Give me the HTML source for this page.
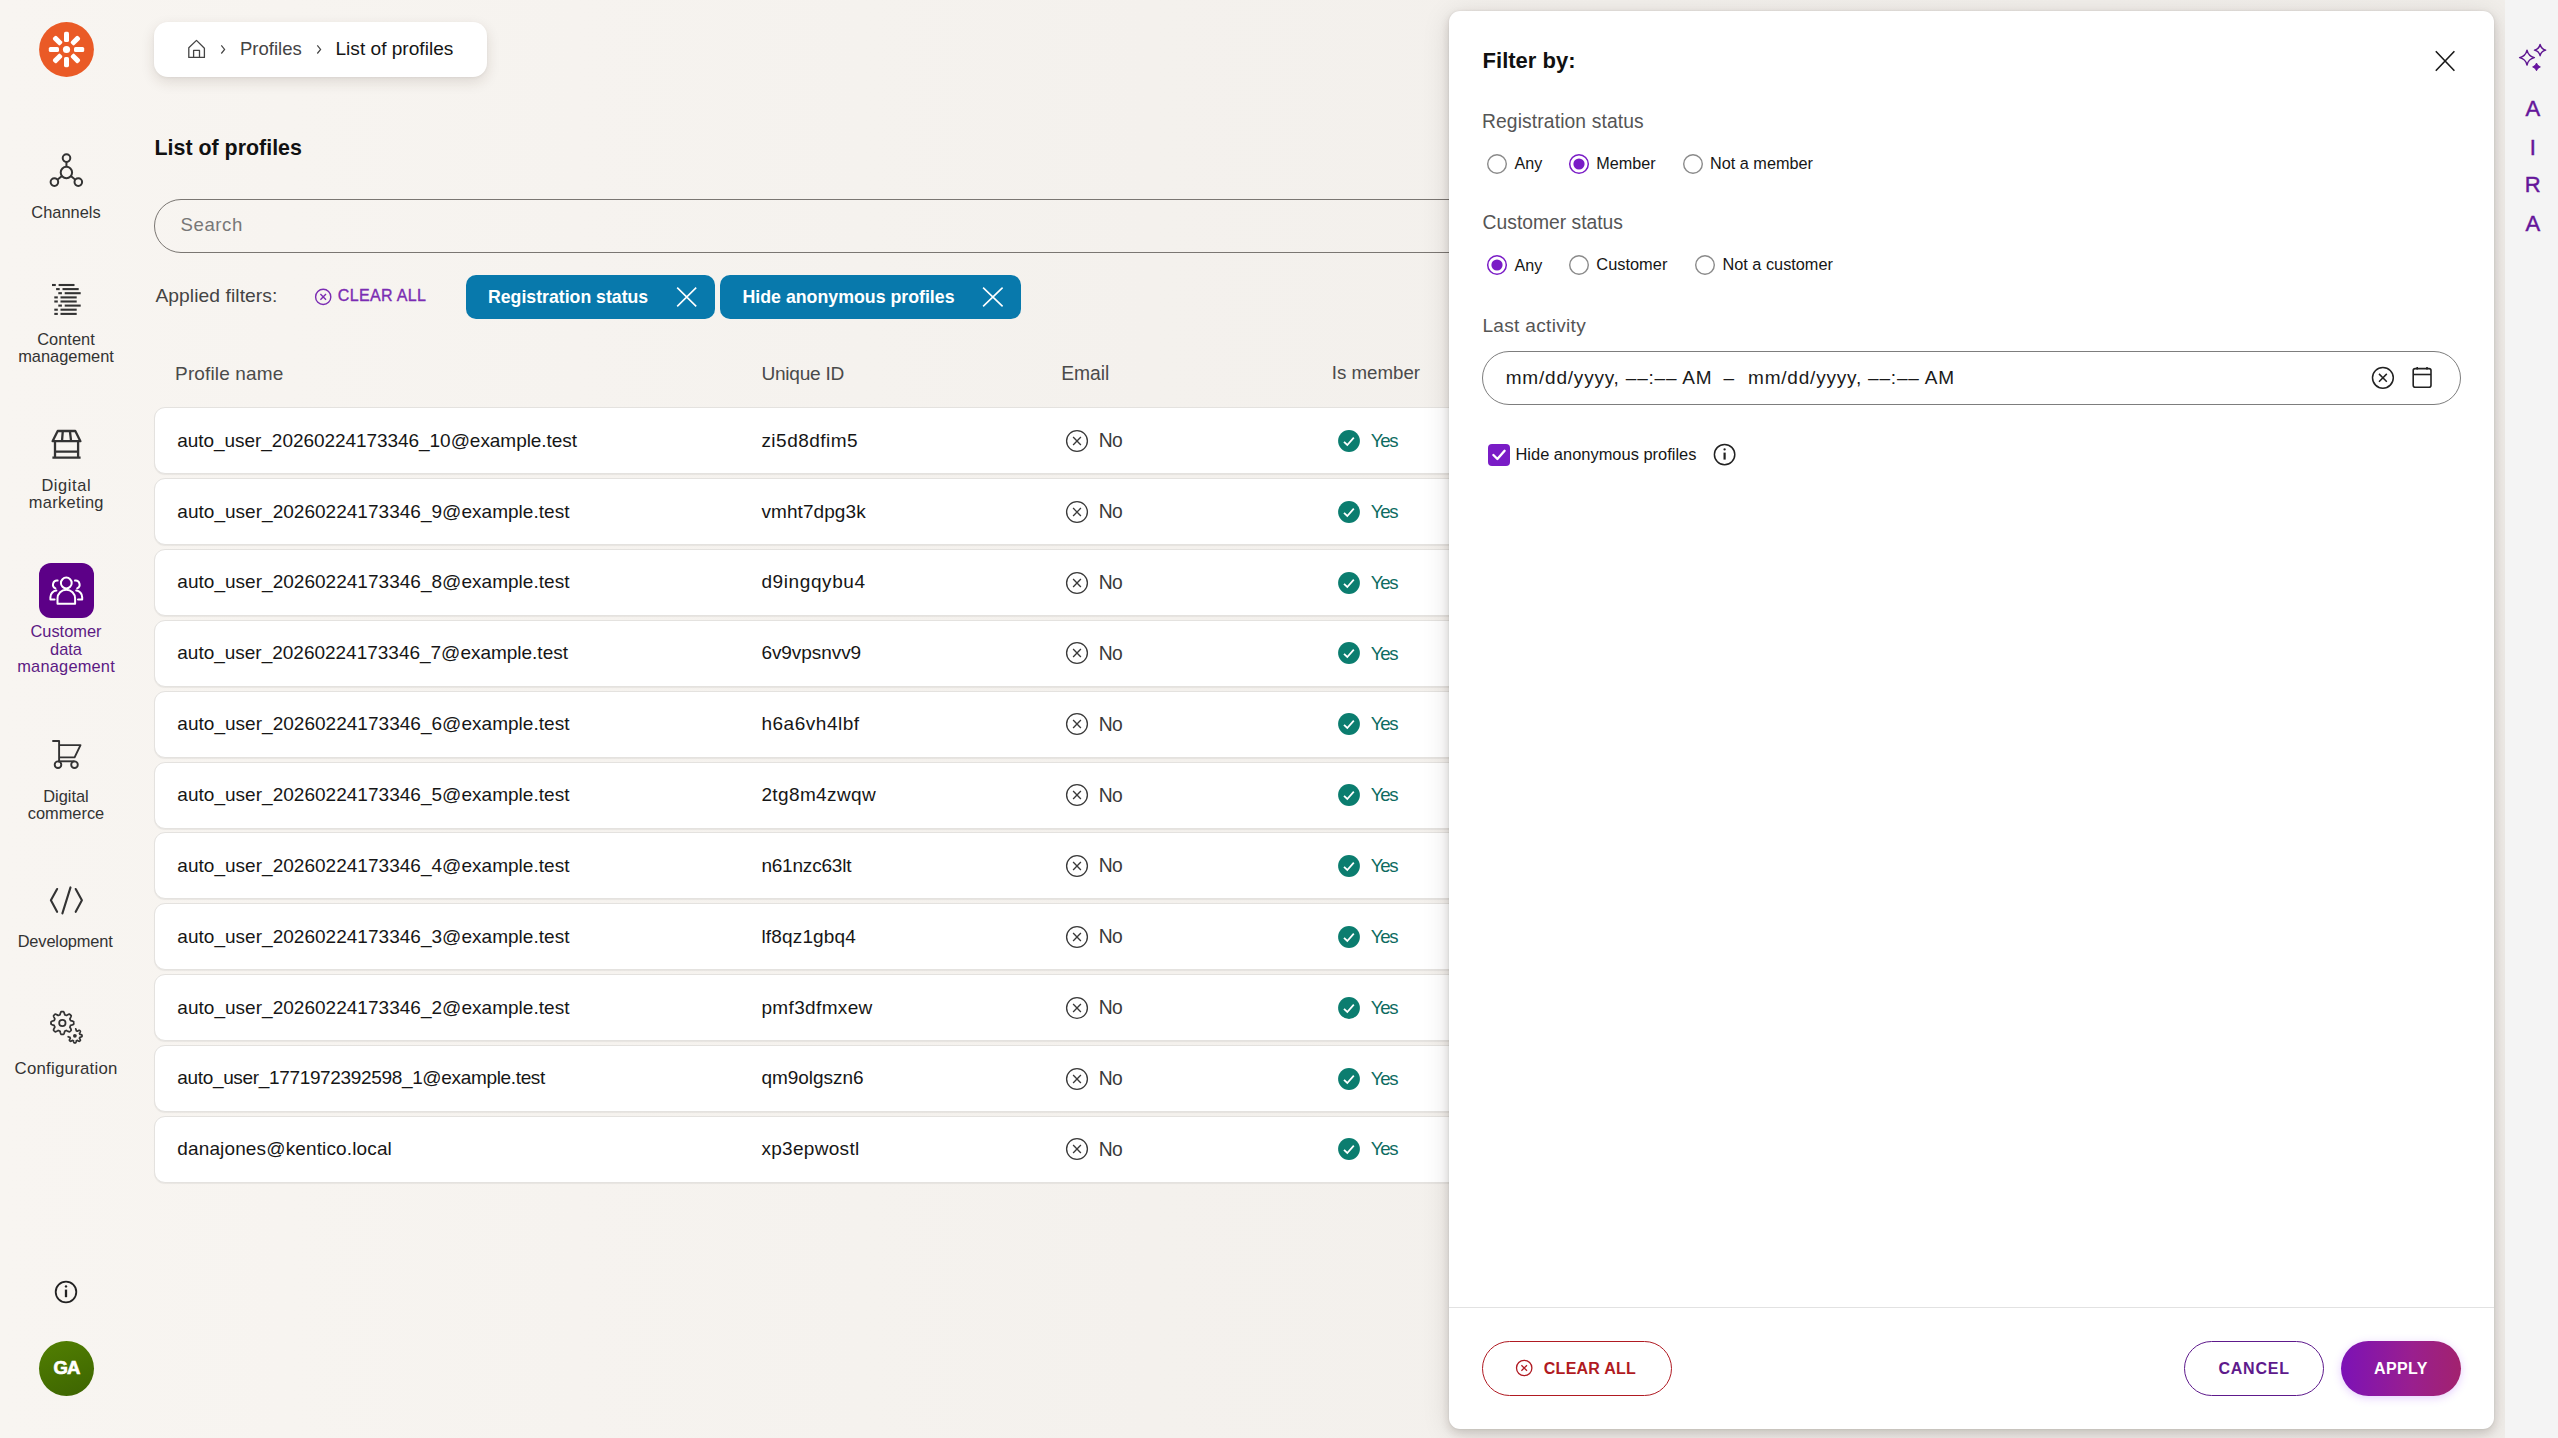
<!DOCTYPE html>
<html><head><meta charset="utf-8"><title>List of profiles</title>
<style>
html,body{margin:0;padding:0}
body{width:2558px;height:1438px;overflow:hidden;position:relative;font-family:'Liberation Sans',sans-serif;background:linear-gradient(90deg,#f8f5f1 0%,#f4f1ed 45%,#f1eeea 100%)}
.a{position:absolute}
.t{position:absolute;white-space:nowrap;line-height:1;font-family:'Liberation Sans',sans-serif;}
.row{width:1330px;height:67px;box-sizing:border-box;background:#fff;border:1px solid #e4e2df;border-radius:11px;box-shadow:0 1px 1px rgba(0,0,0,0.06)}
svg{overflow:visible}
</style></head><body>
<svg class="a" style="left:38px;top:21px" width="57" height="57" viewBox="-28.5 -28.5 57 57"><circle r="27.4" fill="#ea5a26"/><rect x="-2.5" y="-17.7" width="5" height="10.2" rx="1.6" fill="#fff" transform="rotate(0)"/><rect x="-2.5" y="-17.7" width="5" height="10.2" rx="1.6" fill="#fff" transform="rotate(45)"/><rect x="-2.5" y="-17.7" width="5" height="10.2" rx="1.6" fill="#fff" transform="rotate(90)"/><rect x="-2.5" y="-17.7" width="5" height="10.2" rx="1.6" fill="#fff" transform="rotate(135)"/><rect x="-2.5" y="-17.7" width="5" height="10.2" rx="1.6" fill="#fff" transform="rotate(180)"/><rect x="-2.5" y="-17.7" width="5" height="10.2" rx="1.6" fill="#fff" transform="rotate(225)"/><rect x="-2.5" y="-17.7" width="5" height="10.2" rx="1.6" fill="#fff" transform="rotate(270)"/><rect x="-2.5" y="-17.7" width="5" height="10.2" rx="1.6" fill="#fff" transform="rotate(315)"/><circle r="3.6" fill="#fff"/></svg>
<svg class="a" style="left:46px;top:148px" width="40" height="44" viewBox="46 148 40 44" fill="none" stroke="#333" stroke-width="2">
<circle cx="66.5" cy="158.1" r="3.8"/><circle cx="66.4" cy="172.5" r="5.7"/><circle cx="54.4" cy="182.1" r="3.8"/><circle cx="78.3" cy="182.1" r="3.8"/>
<line x1="66.44" y1="166.80" x2="66.47" y2="161.90"/><line x1="61.95" y1="176.06" x2="57.37" y2="179.73"/><line x1="70.84" y1="176.08" x2="75.34" y2="179.71"/></svg>
<div class="t" style="left:-34.0px;width:200px;text-align:center;top:203.92px;font-size:16.4px;color:#333;font-weight:400;letter-spacing:0px">Channels</div>
<svg class="a" style="left:46px;top:278px" width="40" height="42" viewBox="46 278 40 42" fill="none" stroke="#333" stroke-width="2.1"><line x1="52" y1="285.0" x2="55.8" y2="285.0"/><line x1="58.6" y1="285.0" x2="74.5" y2="285.0"/><line x1="56.1" y1="289.1" x2="59.7" y2="289.1"/><line x1="62.5" y1="289.1" x2="78.7" y2="289.1"/><line x1="58.3" y1="293.2" x2="61.9" y2="293.2"/><line x1="64.7" y1="293.2" x2="80.7" y2="293.2"/><line x1="54.3" y1="297.4" x2="57.8" y2="297.4"/><line x1="60.5" y1="297.4" x2="76.7" y2="297.4"/><line x1="54.3" y1="301.5" x2="57.8" y2="301.5"/><line x1="60.5" y1="301.5" x2="76.7" y2="301.5"/><line x1="58.3" y1="305.6" x2="61.9" y2="305.6"/><line x1="64.7" y1="305.6" x2="80.7" y2="305.6"/><line x1="54.3" y1="309.7" x2="57.8" y2="309.7"/><line x1="60.5" y1="309.7" x2="76.7" y2="309.7"/><line x1="54.3" y1="313.9" x2="57.8" y2="313.9"/><line x1="60.5" y1="313.9" x2="76.7" y2="313.9"/></svg>
<div class="t" style="left:-34.0px;width:200px;text-align:center;top:330.72px;font-size:16.4px;color:#333;font-weight:400;letter-spacing:0px">Content</div>
<div class="t" style="left:-34.0px;width:200px;text-align:center;top:348.32px;font-size:16.4px;color:#333;font-weight:400;letter-spacing:0px">management</div>
<svg class="a" style="left:46px;top:424px" width="42" height="40" viewBox="46 424 42 40" fill="none" stroke="#333" stroke-width="2.3" stroke-linejoin="round">
<path d="M57.7 431 H75.3 L80.4 441.2 H52.6 Z"/><path d="M62.8 431 L62 441.2 M69.9 431 L71.1 441.2"/>
<path d="M55 441.2 V457.6 M78.1 441.2 V457.6 M55 451.6 H78.1 M52.4 457.7 H80.6"/></svg>
<div class="t" style="left:-33.7px;width:200px;text-align:center;top:476.92px;font-size:16.4px;color:#333;font-weight:400;letter-spacing:0.6px">Digital</div>
<div class="t" style="left:-33.7px;width:200px;text-align:center;top:494.42px;font-size:16.4px;color:#333;font-weight:400;letter-spacing:0.33px">marketing</div>
<div class="a" style="left:38.9px;top:562.8px;width:55px;height:55px;border-radius:12px;background:#5c0087"></div>
<svg class="a" style="left:46px;top:570px" width="40" height="40" viewBox="46 570 40 40" fill="none" stroke="#fff" stroke-width="2" stroke-linejoin="round" stroke-linecap="round">
<circle cx="66.3" cy="583" r="5.4"/>
<path d="M57.5 603.8 V598.5 A8.8 8.8 0 0 1 75.1 598.5 V603.8 Z"/>
<path d="M57.6 580.6 A4.1 4.1 0 0 0 55.4 588.4"/><path d="M75 580.6 A4.1 4.1 0 0 1 77.2 588.4"/>
<path d="M56.4 590.6 A6.5 6.5 0 0 0 50.4 597.2 V599.6 H54.6"/><path d="M76.2 590.6 A6.5 6.5 0 0 1 82.2 597.2 V599.6 H78"/>
</svg>
<div class="t" style="left:-34.0px;width:200px;text-align:center;top:622.92px;font-size:16.4px;color:#5c1a84;font-weight:400;letter-spacing:0px">Customer</div>
<div class="t" style="left:-34.0px;width:200px;text-align:center;top:640.52px;font-size:16.4px;color:#5c1a84;font-weight:400;letter-spacing:0px">data</div>
<div class="t" style="left:-33.900000000000006px;width:200px;text-align:center;top:658.12px;font-size:16.4px;color:#5c1a84;font-weight:400;letter-spacing:0.2px">management</div>
<svg class="a" style="left:46px;top:734px" width="42" height="40" viewBox="46 734 42 40" fill="none" stroke="#333" stroke-width="1.9" stroke-linejoin="round">
<path d="M52.3 741 H59.1 V761.4"/><path d="M59.1 745.1 H80.5 L74.6 757.4 H59.1"/><path d="M58 761.3 H74.5"/>
<circle cx="58" cy="764.7" r="3.3"/><circle cx="74.5" cy="764.7" r="3.3"/></svg>
<div class="t" style="left:-34.0px;width:200px;text-align:center;top:787.92px;font-size:16.4px;color:#333;font-weight:400;letter-spacing:0px">Digital</div>
<div class="t" style="left:-34.0px;width:200px;text-align:center;top:805.22px;font-size:16.4px;color:#333;font-weight:400;letter-spacing:0px">commerce</div>
<svg class="a" style="left:44px;top:882px" width="44" height="38" viewBox="44 882 44 38" fill="none" stroke="#333" stroke-width="2.1" stroke-linejoin="round" stroke-linecap="round">
<path d="M57.1 889 L50.9 900.3 L57.1 911.8"/><path d="M75.7 889 L81.9 900.3 L75.7 911.8"/><path d="M70.5 887.4 L62.4 913.4"/></svg>
<div class="t" style="left:-34.8px;width:200px;text-align:center;top:933.32px;font-size:16.4px;color:#333;font-weight:400;letter-spacing:-0.13px">Development</div>
<svg class="a" style="left:44px;top:1004px" width="44" height="46" viewBox="44 1004 44 46" fill="none" stroke="#333" stroke-width="1.75" stroke-linejoin="round" stroke-linecap="round">
<path d="M73.76 1022.97 L73.76 1023.27 L73.74 1023.56 L73.73 1023.86 L73.70 1024.16 L73.31 1024.41 L72.86 1024.63 L72.38 1024.82 L71.89 1024.99 L71.40 1025.13 L70.94 1025.26 L70.52 1025.38 L70.45 1025.59 L70.38 1025.80 L70.30 1026.00 L70.22 1026.21 L70.13 1026.41 L70.04 1026.62 L69.94 1026.81 L69.84 1027.01 L70.02 1027.37 L70.25 1027.78 L70.49 1028.22 L70.73 1028.69 L70.93 1029.17 L71.10 1029.64 L71.22 1030.10 L71.05 1030.35 L70.86 1030.57 L70.65 1030.79 L70.45 1031.00 L70.24 1031.21 L70.02 1031.42 L69.79 1031.61 L69.57 1031.80 L69.15 1031.75 L68.68 1031.59 L68.20 1031.39 L67.73 1031.16 L67.28 1030.92 L66.86 1030.68 L66.47 1030.47 L66.25 1030.53 L66.06 1030.62 L65.85 1030.72 L65.65 1030.81 L65.45 1030.89 L65.24 1030.97 L65.03 1031.04 L64.82 1031.11 L64.68 1031.44 L64.55 1031.89 L64.41 1032.37 L64.25 1032.87 L64.07 1033.35 L63.85 1033.81 L63.61 1034.23 L63.32 1034.33 L63.03 1034.35 L62.73 1034.36 L62.43 1034.37 L62.14 1034.37 L61.84 1034.36 L61.54 1034.34 L61.25 1034.32 L60.98 1034.03 L60.76 1033.59 L60.56 1033.11 L60.38 1032.62 L60.23 1032.13 L60.10 1031.66 L59.98 1031.23 L59.80 1031.07 L59.59 1031.00 L59.38 1030.93 L59.17 1030.85 L58.97 1030.76 L58.76 1030.67 L58.57 1030.58 L58.37 1030.47 L58.06 1030.57 L57.66 1030.80 L57.22 1031.04 L56.76 1031.28 L56.28 1031.50 L55.81 1031.67 L55.34 1031.80 L55.04 1031.71 L54.81 1031.51 L54.59 1031.31 L54.38 1031.11 L54.17 1030.90 L53.96 1030.68 L53.77 1030.46 L53.57 1030.23 L53.55 1029.87 L53.70 1029.40 L53.89 1028.93 L54.11 1028.45 L54.35 1028.00 L54.59 1027.57 L54.81 1027.18 L54.83 1026.91 L54.73 1026.71 L54.63 1026.51 L54.54 1026.31 L54.46 1026.11 L54.38 1025.90 L54.31 1025.69 L54.24 1025.48 L54.00 1025.32 L53.56 1025.20 L53.08 1025.06 L52.59 1024.91 L52.09 1024.73 L51.63 1024.52 L51.20 1024.29 L51.01 1024.01 L50.98 1023.71 L50.97 1023.42 L50.96 1023.12 L50.96 1022.82 L50.97 1022.52 L50.98 1022.23 L51.01 1021.93 L51.20 1021.65 L51.63 1021.42 L52.09 1021.21 L52.59 1021.03 L53.08 1020.88 L53.56 1020.74 L54.00 1020.62 L54.24 1020.46 L54.31 1020.25 L54.38 1020.04 L54.46 1019.83 L54.54 1019.63 L54.63 1019.43 L54.73 1019.23 L54.83 1019.03 L54.81 1018.76 L54.59 1018.37 L54.35 1017.94 L54.11 1017.49 L53.89 1017.01 L53.70 1016.54 L53.55 1016.07 L53.57 1015.71 L53.77 1015.48 L53.96 1015.26 L54.17 1015.04 L54.38 1014.83 L54.59 1014.63 L54.81 1014.43 L55.04 1014.23 L55.34 1014.14 L55.81 1014.27 L56.28 1014.44 L56.76 1014.66 L57.22 1014.90 L57.66 1015.14 L58.06 1015.37 L58.37 1015.47 L58.57 1015.36 L58.76 1015.27 L58.97 1015.18 L59.17 1015.09 L59.38 1015.01 L59.59 1014.94 L59.80 1014.87 L59.98 1014.71 L60.10 1014.28 L60.23 1013.81 L60.38 1013.32 L60.56 1012.83 L60.76 1012.35 L60.98 1011.91 L61.25 1011.62 L61.54 1011.60 L61.84 1011.58 L62.14 1011.57 L62.43 1011.57 L62.73 1011.58 L63.03 1011.59 L63.32 1011.61 L63.61 1011.71 L63.85 1012.13 L64.07 1012.59 L64.25 1013.07 L64.41 1013.57 L64.55 1014.05 L64.68 1014.50 L64.82 1014.83 L65.03 1014.90 L65.24 1014.97 L65.45 1015.05 L65.65 1015.13 L65.85 1015.22 L66.06 1015.32 L66.25 1015.41 L66.47 1015.47 L66.86 1015.26 L67.28 1015.02 L67.73 1014.78 L68.20 1014.55 L68.68 1014.35 L69.15 1014.19 L69.57 1014.14 L69.79 1014.33 L70.02 1014.52 L70.24 1014.73 L70.45 1014.94 L70.65 1015.15 L70.86 1015.37 L71.05 1015.59 L71.22 1015.84 L71.10 1016.30 L70.93 1016.77 L70.73 1017.25 L70.49 1017.72 L70.25 1018.16 L70.02 1018.57 L69.84 1018.93 L69.94 1019.13 L70.04 1019.32 L70.13 1019.53 L70.22 1019.73 L70.30 1019.94 L70.38 1020.14 L70.45 1020.35 L70.52 1020.56 L70.94 1020.68 L71.40 1020.81 L71.89 1020.95 L72.38 1021.12 L72.86 1021.31 L73.31 1021.53 L73.70 1021.78 L73.73 1022.08 L73.74 1022.38 L73.76 1022.67 L73.76 1022.97 Z"/><circle cx="62.36" cy="1022.97" r="3.2"/><path d="M75.75 1028.90 L75.89 1029.19 L76.01 1029.50 L76.11 1029.82 L76.20 1030.14 L76.28 1030.44 L76.35 1030.72 L76.46 1030.84 L76.59 1030.88 L76.71 1030.93 L76.84 1030.98 L76.97 1031.03 L77.09 1031.08 L77.21 1031.14 L77.33 1031.20 L77.51 1031.15 L77.77 1031.00 L78.04 1030.84 L78.34 1030.68 L78.64 1030.53 L78.94 1030.40 L79.24 1030.31 L79.45 1030.35 L79.59 1030.47 L79.72 1030.59 L79.86 1030.72 L79.99 1030.85 L80.11 1030.98 L80.24 1031.12 L80.36 1031.26 L80.39 1031.47 L80.29 1031.77 L80.17 1032.07 L80.02 1032.38 L79.86 1032.67 L79.69 1032.94 L79.54 1033.19 L79.50 1033.37 L79.56 1033.49 L79.62 1033.62 L79.67 1033.74 L79.73 1033.86 L79.77 1033.99 L79.82 1034.12 L79.86 1034.25 L79.99 1034.35 L80.27 1034.42 L80.57 1034.50 L80.89 1034.59 L81.22 1034.69 L81.52 1034.82 L81.80 1034.96 L81.97 1035.12 L81.98 1035.31 L81.99 1035.49 L82.00 1035.68 L82.00 1035.86 L82.00 1036.05 L81.99 1036.23 L81.97 1036.42 L81.89 1036.59 L81.62 1036.74 L81.31 1036.87 L81.00 1036.98 L80.68 1037.07 L80.36 1037.16 L80.07 1037.23 L79.88 1037.31 L79.83 1037.44 L79.79 1037.57 L79.74 1037.70 L79.69 1037.82 L79.64 1037.95 L79.58 1038.07 L79.52 1038.19 L79.50 1038.33 L79.64 1038.58 L79.80 1038.84 L79.97 1039.13 L80.12 1039.43 L80.26 1039.73 L80.36 1040.04 L80.40 1040.30 L80.28 1040.44 L80.15 1040.58 L80.03 1040.71 L79.90 1040.84 L79.77 1040.97 L79.63 1041.10 L79.49 1041.22 L79.33 1041.31 L79.04 1041.23 L78.73 1041.11 L78.43 1040.97 L78.13 1040.81 L77.85 1040.65 L77.59 1040.49 L77.37 1040.38 L77.25 1040.44 L77.13 1040.50 L77.00 1040.55 L76.88 1040.61 L76.75 1040.66 L76.63 1040.70 L76.50 1040.75 L76.37 1040.80 L76.30 1041.07 L76.23 1041.36 L76.14 1041.68 L76.04 1042.00 L75.93 1042.32 L75.79 1042.61 L75.64 1042.86 L75.46 1042.88 L75.27 1042.89 L75.09 1042.90 L74.90 1042.90 L74.72 1042.90 L74.53 1042.89 L74.35 1042.88 L74.16 1042.86 L74.01 1042.62 L73.87 1042.32 L73.76 1042.01 L73.66 1041.69 L73.57 1041.37 L73.50 1041.07 L73.43 1040.80 L73.30 1040.75 L73.18 1040.71 L73.05 1040.66 L72.92 1040.61 L72.80 1040.56 L72.68 1040.50 L72.55 1040.44 L72.43 1040.38 L72.21 1040.49 L71.95 1040.65 L71.67 1040.81 L71.38 1040.97 L71.07 1041.11 L70.77 1041.23 L70.48 1041.31 L70.31 1041.22 L70.17 1041.10 L70.04 1040.97 L69.90 1040.84 L69.77 1040.71 L69.65 1040.58 L69.53 1040.44 L69.41 1040.30 L69.44 1040.04 L69.54 1039.74 L69.67 1039.44 L69.83 1039.14 L69.99 1038.85 L70.15 1038.58 L70.30 1038.34 L70.28 1038.19 L70.22 1038.07 L70.16 1037.95 L70.11 1037.82 L70.06 1037.70 L70.01 1037.57 L69.97 1037.44 L69.93 1037.32 L69.73 1037.23 L69.44 1037.16 L69.13 1037.08 L68.81 1036.98 L68.49 1036.87 L68.19 1036.74"/><circle cx="74.9" cy="1035.8" r="1.9" fill="#333" stroke="none"/></svg>
<div class="t" style="left:-33.900000000000006px;width:200px;text-align:center;top:1060.98px;font-size:16.8px;color:#333;font-weight:400;letter-spacing:0.25px">Configuration</div>
<svg class="a" style="left:52px;top:1278px" width="28" height="28" viewBox="52 1278 28 28" fill="none" stroke="#222" stroke-width="1.8">
<circle cx="66" cy="1292" r="10.3"/><line x1="66" y1="1289.6" x2="66" y2="1297.2" stroke-width="2.3"/><circle cx="66" cy="1286.4" r="1.2" fill="#222" stroke="none"/></svg>
<div class="a" style="left:38.8px;top:1341px;width:55px;height:55px;border-radius:50%;background:linear-gradient(160deg,#527f02 0%,#456f01 60%,#3d6402 100%)"></div>
<div class="t" style="left:16.4px;width:100px;text-align:center;top:1359.14px;font-size:18.5px;color:#fff;font-weight:700;letter-spacing:-0.9px;-webkit-text-stroke:0.7px #fff">GA</div>
<div class="a" style="left:154px;top:22px;width:333px;height:55px;border-radius:14px;background:#fff;box-shadow:0 5px 14px rgba(60,40,20,0.13),0 1px 3px rgba(0,0,0,0.05)"></div>
<svg class="a" style="left:184px;top:36px" width="26" height="26" viewBox="184 36 26 26" fill="none" stroke="#444" stroke-width="1.3" stroke-linejoin="round">
<path d="M188.8 57.4 V47.8 L196.5 40.4 L204.4 48.2 V57.4 Z"/><path d="M193.6 57.4 V50.4 H199.5 V57.4"/></svg>
<svg class="a" style="left:216px;top:40px" width="12" height="18" viewBox="216 40 12 18" fill="none" stroke="#444" stroke-width="1.2"><path d="M221.3 45.4 L224.6 49.4 L221.3 53.5"/></svg>
<div class="t" style="left:240px;top:39.54px;font-size:18.5px;color:#444;font-weight:400;letter-spacing:0px;">Profiles</div>
<svg class="a" style="left:312px;top:40px" width="12" height="18" viewBox="312 40 12 18" fill="none" stroke="#444" stroke-width="1.2"><path d="M317.3 45.4 L320.6 49.4 L317.3 53.5"/></svg>
<div class="t" style="left:335.5px;top:39.03px;font-size:19.1px;color:#151515;font-weight:400;letter-spacing:0px;">List of profiles</div>
<div class="t" style="left:154.5px;top:138.38px;font-size:21.4px;color:#111;font-weight:700;letter-spacing:0px;">List of profiles</div>
<div class="a" style="left:154px;top:198.5px;width:1400px;height:54px;box-sizing:border-box;border:1.3px solid #7a7672;border-radius:27px"></div>
<div class="t" style="left:180.6px;top:216.06px;font-size:18.6px;color:#777;font-weight:400;letter-spacing:0.55px;">Search</div>
<div class="t" style="left:155.4px;top:285.90px;font-size:19.25px;color:#444;font-weight:400;letter-spacing:0.07px;">Applied filters:</div>
<svg class="a" style="left:312px;top:286px" width="22" height="22" viewBox="312 286 22 22" fill="none" stroke="#7b2cb3" stroke-width="1.4">
<circle cx="323.2" cy="296.9" r="7.6"/><path d="M320.4 294.1 L326 299.7 M326 294.1 L320.4 299.7"/></svg>
<div class="t" style="left:337.8px;top:288.46px;font-size:16px;color:#7b2cb3;font-weight:400;letter-spacing:0.35px;-webkit-text-stroke:0.35px #7b2cb3;">CLEAR ALL</div>
<div class="a" style="left:466px;top:275px;width:248.6px;height:43.7px;border-radius:10px;background:#0879ac"></div>
<div class="t" style="left:488px;top:288.62px;font-size:17.7px;color:#fff;font-weight:700;letter-spacing:0px;">Registration status</div>
<svg class="a" style="left:672px;top:282px" width="30" height="30" viewBox="672 282 30 30" fill="none" stroke="#fff" stroke-width="1.6"><path d="M677.2 287.6 L696.2 306.4 M696.2 287.6 L677.2 306.4"/></svg>
<div class="a" style="left:720px;top:275px;width:301px;height:43.7px;border-radius:10px;background:#0879ac"></div>
<div class="t" style="left:742.5px;top:288.57px;font-size:17.75px;color:#fff;font-weight:700;letter-spacing:0px;">Hide anonymous profiles</div>
<svg class="a" style="left:978px;top:282px" width="30" height="30" viewBox="978 282 30 30" fill="none" stroke="#fff" stroke-width="1.6"><path d="M983.1 287.6 L1002.6 306.4 M1002.6 287.6 L983.1 306.4"/></svg>
<div class="t" style="left:175.1px;top:363.82px;font-size:19px;color:#4a4a4a;font-weight:400;letter-spacing:0.14px;">Profile name</div>
<div class="t" style="left:761.4px;top:363.73px;font-size:19.1px;color:#4a4a4a;font-weight:400;letter-spacing:-0.25px;">Unique ID</div>
<div class="t" style="left:1061.2px;top:363.56px;font-size:19.3px;color:#4a4a4a;font-weight:400;letter-spacing:0px;">Email</div>
<div class="t" style="left:1331.8px;top:364.07px;font-size:18.7px;color:#4a4a4a;font-weight:400;letter-spacing:0px;">Is member</div>
<div class="a row" style="left:154px;top:407.30px"></div>
<div class="t" style="left:177.3px;top:430.72px;font-size:19px;color:#161616;font-weight:400;letter-spacing:-0.051px;">auto_user_20260224173346_10@example.test</div>
<div class="t" style="left:761.4px;top:430.72px;font-size:19px;color:#161616;font-weight:400;letter-spacing:0.483px;">zi5d8dfim5</div>
<svg class="a" style="left:1062.95px;top:426.90px" width="28" height="28" viewBox="-14 -14 28 28" fill="none" stroke="#3a3a3a" stroke-width="1.35"><circle r="10.4"/><path d="M-3.9 -3.9 L3.9 3.9 M3.9 -3.9 L-3.9 3.9"/></svg>
<div class="t" style="left:1098.8px;top:431.36px;font-size:19.3px;color:#3a3a3a;font-weight:400;letter-spacing:-0.6px;">No</div>
<svg class="a" style="left:1335px;top:426.90px" width="28" height="28" viewBox="-14 -14 28 28"><circle r="10.9" fill="#0b7d6f"/><path d="M-5 0.8 L-1.7 4 L4.8 -3.3" fill="none" stroke="#fff" stroke-width="1.8"/></svg>
<div class="t" style="left:1370.8px;top:431.96px;font-size:18.6px;color:#0d6b61;font-weight:400;letter-spacing:-1.3px;">Yes</div>
<div class="a row" style="left:154px;top:478.15px"></div>
<div class="t" style="left:177.3px;top:501.57px;font-size:19px;color:#161616;font-weight:400;letter-spacing:0.026px;">auto_user_20260224173346_9@example.test</div>
<div class="t" style="left:761.4px;top:501.57px;font-size:19px;color:#161616;font-weight:400;letter-spacing:0.084px;">vmht7dpg3k</div>
<svg class="a" style="left:1062.95px;top:497.75px" width="28" height="28" viewBox="-14 -14 28 28" fill="none" stroke="#3a3a3a" stroke-width="1.35"><circle r="10.4"/><path d="M-3.9 -3.9 L3.9 3.9 M3.9 -3.9 L-3.9 3.9"/></svg>
<div class="t" style="left:1098.8px;top:502.21px;font-size:19.3px;color:#3a3a3a;font-weight:400;letter-spacing:-0.6px;">No</div>
<svg class="a" style="left:1335px;top:497.75px" width="28" height="28" viewBox="-14 -14 28 28"><circle r="10.9" fill="#0b7d6f"/><path d="M-5 0.8 L-1.7 4 L4.8 -3.3" fill="none" stroke="#fff" stroke-width="1.8"/></svg>
<div class="t" style="left:1370.8px;top:502.81px;font-size:18.6px;color:#0d6b61;font-weight:400;letter-spacing:-1.3px;">Yes</div>
<div class="a row" style="left:154px;top:549.00px"></div>
<div class="t" style="left:177.3px;top:572.42px;font-size:19px;color:#161616;font-weight:400;letter-spacing:0.026px;">auto_user_20260224173346_8@example.test</div>
<div class="t" style="left:761.4px;top:572.42px;font-size:19px;color:#161616;font-weight:400;letter-spacing:0.606px;">d9ingqybu4</div>
<svg class="a" style="left:1062.95px;top:568.60px" width="28" height="28" viewBox="-14 -14 28 28" fill="none" stroke="#3a3a3a" stroke-width="1.35"><circle r="10.4"/><path d="M-3.9 -3.9 L3.9 3.9 M3.9 -3.9 L-3.9 3.9"/></svg>
<div class="t" style="left:1098.8px;top:573.06px;font-size:19.3px;color:#3a3a3a;font-weight:400;letter-spacing:-0.6px;">No</div>
<svg class="a" style="left:1335px;top:568.60px" width="28" height="28" viewBox="-14 -14 28 28"><circle r="10.9" fill="#0b7d6f"/><path d="M-5 0.8 L-1.7 4 L4.8 -3.3" fill="none" stroke="#fff" stroke-width="1.8"/></svg>
<div class="t" style="left:1370.8px;top:573.66px;font-size:18.6px;color:#0d6b61;font-weight:400;letter-spacing:-1.3px;">Yes</div>
<div class="a row" style="left:154px;top:619.85px"></div>
<div class="t" style="left:177.3px;top:643.27px;font-size:19px;color:#161616;font-weight:400;letter-spacing:-0.013px;">auto_user_20260224173346_7@example.test</div>
<div class="t" style="left:761.4px;top:643.27px;font-size:19px;color:#161616;font-weight:400;letter-spacing:-0.061px;">6v9vpsnvv9</div>
<svg class="a" style="left:1062.95px;top:639.45px" width="28" height="28" viewBox="-14 -14 28 28" fill="none" stroke="#3a3a3a" stroke-width="1.35"><circle r="10.4"/><path d="M-3.9 -3.9 L3.9 3.9 M3.9 -3.9 L-3.9 3.9"/></svg>
<div class="t" style="left:1098.8px;top:643.91px;font-size:19.3px;color:#3a3a3a;font-weight:400;letter-spacing:-0.6px;">No</div>
<svg class="a" style="left:1335px;top:639.45px" width="28" height="28" viewBox="-14 -14 28 28"><circle r="10.9" fill="#0b7d6f"/><path d="M-5 0.8 L-1.7 4 L4.8 -3.3" fill="none" stroke="#fff" stroke-width="1.8"/></svg>
<div class="t" style="left:1370.8px;top:644.51px;font-size:18.6px;color:#0d6b61;font-weight:400;letter-spacing:-1.3px;">Yes</div>
<div class="a row" style="left:154px;top:690.70px"></div>
<div class="t" style="left:177.3px;top:714.12px;font-size:19px;color:#161616;font-weight:400;letter-spacing:0.026px;">auto_user_20260224173346_6@example.test</div>
<div class="t" style="left:761.4px;top:714.12px;font-size:19px;color:#161616;font-weight:400;letter-spacing:0.528px;">h6a6vh4lbf</div>
<svg class="a" style="left:1062.95px;top:710.30px" width="28" height="28" viewBox="-14 -14 28 28" fill="none" stroke="#3a3a3a" stroke-width="1.35"><circle r="10.4"/><path d="M-3.9 -3.9 L3.9 3.9 M3.9 -3.9 L-3.9 3.9"/></svg>
<div class="t" style="left:1098.8px;top:714.76px;font-size:19.3px;color:#3a3a3a;font-weight:400;letter-spacing:-0.6px;">No</div>
<svg class="a" style="left:1335px;top:710.30px" width="28" height="28" viewBox="-14 -14 28 28"><circle r="10.9" fill="#0b7d6f"/><path d="M-5 0.8 L-1.7 4 L4.8 -3.3" fill="none" stroke="#fff" stroke-width="1.8"/></svg>
<div class="t" style="left:1370.8px;top:715.36px;font-size:18.6px;color:#0d6b61;font-weight:400;letter-spacing:-1.3px;">Yes</div>
<div class="a row" style="left:154px;top:761.55px"></div>
<div class="t" style="left:177.3px;top:784.97px;font-size:19px;color:#161616;font-weight:400;letter-spacing:0.026px;">auto_user_20260224173346_5@example.test</div>
<div class="t" style="left:761.4px;top:784.97px;font-size:19px;color:#161616;font-weight:400;letter-spacing:0.384px;">2tg8m4zwqw</div>
<svg class="a" style="left:1062.95px;top:781.15px" width="28" height="28" viewBox="-14 -14 28 28" fill="none" stroke="#3a3a3a" stroke-width="1.35"><circle r="10.4"/><path d="M-3.9 -3.9 L3.9 3.9 M3.9 -3.9 L-3.9 3.9"/></svg>
<div class="t" style="left:1098.8px;top:785.61px;font-size:19.3px;color:#3a3a3a;font-weight:400;letter-spacing:-0.6px;">No</div>
<svg class="a" style="left:1335px;top:781.15px" width="28" height="28" viewBox="-14 -14 28 28"><circle r="10.9" fill="#0b7d6f"/><path d="M-5 0.8 L-1.7 4 L4.8 -3.3" fill="none" stroke="#fff" stroke-width="1.8"/></svg>
<div class="t" style="left:1370.8px;top:786.21px;font-size:18.6px;color:#0d6b61;font-weight:400;letter-spacing:-1.3px;">Yes</div>
<div class="a row" style="left:154px;top:832.40px"></div>
<div class="t" style="left:177.3px;top:855.82px;font-size:19px;color:#161616;font-weight:400;letter-spacing:0.026px;">auto_user_20260224173346_4@example.test</div>
<div class="t" style="left:761.4px;top:855.82px;font-size:19px;color:#161616;font-weight:400;letter-spacing:-0.205px;">n61nzc63lt</div>
<svg class="a" style="left:1062.95px;top:852.00px" width="28" height="28" viewBox="-14 -14 28 28" fill="none" stroke="#3a3a3a" stroke-width="1.35"><circle r="10.4"/><path d="M-3.9 -3.9 L3.9 3.9 M3.9 -3.9 L-3.9 3.9"/></svg>
<div class="t" style="left:1098.8px;top:856.46px;font-size:19.3px;color:#3a3a3a;font-weight:400;letter-spacing:-0.6px;">No</div>
<svg class="a" style="left:1335px;top:852.00px" width="28" height="28" viewBox="-14 -14 28 28"><circle r="10.9" fill="#0b7d6f"/><path d="M-5 0.8 L-1.7 4 L4.8 -3.3" fill="none" stroke="#fff" stroke-width="1.8"/></svg>
<div class="t" style="left:1370.8px;top:857.06px;font-size:18.6px;color:#0d6b61;font-weight:400;letter-spacing:-1.3px;">Yes</div>
<div class="a row" style="left:154px;top:903.25px"></div>
<div class="t" style="left:177.3px;top:926.67px;font-size:19px;color:#161616;font-weight:400;letter-spacing:0.026px;">auto_user_20260224173346_3@example.test</div>
<div class="t" style="left:761.4px;top:926.67px;font-size:19px;color:#161616;font-weight:400;letter-spacing:0.172px;">lf8qz1gbq4</div>
<svg class="a" style="left:1062.95px;top:922.85px" width="28" height="28" viewBox="-14 -14 28 28" fill="none" stroke="#3a3a3a" stroke-width="1.35"><circle r="10.4"/><path d="M-3.9 -3.9 L3.9 3.9 M3.9 -3.9 L-3.9 3.9"/></svg>
<div class="t" style="left:1098.8px;top:927.31px;font-size:19.3px;color:#3a3a3a;font-weight:400;letter-spacing:-0.6px;">No</div>
<svg class="a" style="left:1335px;top:922.85px" width="28" height="28" viewBox="-14 -14 28 28"><circle r="10.9" fill="#0b7d6f"/><path d="M-5 0.8 L-1.7 4 L4.8 -3.3" fill="none" stroke="#fff" stroke-width="1.8"/></svg>
<div class="t" style="left:1370.8px;top:927.91px;font-size:18.6px;color:#0d6b61;font-weight:400;letter-spacing:-1.3px;">Yes</div>
<div class="a row" style="left:154px;top:974.10px"></div>
<div class="t" style="left:177.3px;top:997.52px;font-size:19px;color:#161616;font-weight:400;letter-spacing:0.026px;">auto_user_20260224173346_2@example.test</div>
<div class="t" style="left:761.4px;top:997.52px;font-size:19px;color:#161616;font-weight:400;letter-spacing:0.36px;">pmf3dfmxew</div>
<svg class="a" style="left:1062.95px;top:993.70px" width="28" height="28" viewBox="-14 -14 28 28" fill="none" stroke="#3a3a3a" stroke-width="1.35"><circle r="10.4"/><path d="M-3.9 -3.9 L3.9 3.9 M3.9 -3.9 L-3.9 3.9"/></svg>
<div class="t" style="left:1098.8px;top:998.16px;font-size:19.3px;color:#3a3a3a;font-weight:400;letter-spacing:-0.6px;">No</div>
<svg class="a" style="left:1335px;top:993.70px" width="28" height="28" viewBox="-14 -14 28 28"><circle r="10.9" fill="#0b7d6f"/><path d="M-5 0.8 L-1.7 4 L4.8 -3.3" fill="none" stroke="#fff" stroke-width="1.8"/></svg>
<div class="t" style="left:1370.8px;top:998.76px;font-size:18.6px;color:#0d6b61;font-weight:400;letter-spacing:-1.3px;">Yes</div>
<div class="a row" style="left:154px;top:1044.95px"></div>
<div class="t" style="left:177.3px;top:1068.37px;font-size:19px;color:#161616;font-weight:400;letter-spacing:-0.34px;">auto_user_1771972392598_1@example.test</div>
<div class="t" style="left:761.4px;top:1068.37px;font-size:19px;color:#161616;font-weight:400;letter-spacing:-0.039px;">qm9olgszn6</div>
<svg class="a" style="left:1062.95px;top:1064.55px" width="28" height="28" viewBox="-14 -14 28 28" fill="none" stroke="#3a3a3a" stroke-width="1.35"><circle r="10.4"/><path d="M-3.9 -3.9 L3.9 3.9 M3.9 -3.9 L-3.9 3.9"/></svg>
<div class="t" style="left:1098.8px;top:1069.01px;font-size:19.3px;color:#3a3a3a;font-weight:400;letter-spacing:-0.6px;">No</div>
<svg class="a" style="left:1335px;top:1064.55px" width="28" height="28" viewBox="-14 -14 28 28"><circle r="10.9" fill="#0b7d6f"/><path d="M-5 0.8 L-1.7 4 L4.8 -3.3" fill="none" stroke="#fff" stroke-width="1.8"/></svg>
<div class="t" style="left:1370.8px;top:1069.61px;font-size:18.6px;color:#0d6b61;font-weight:400;letter-spacing:-1.3px;">Yes</div>
<div class="a row" style="left:154px;top:1115.80px"></div>
<div class="t" style="left:177.3px;top:1139.22px;font-size:19px;color:#161616;font-weight:400;letter-spacing:0.136px;">danajones@kentico.local</div>
<div class="t" style="left:761.4px;top:1139.22px;font-size:19px;color:#161616;font-weight:400;letter-spacing:0.306px;">xp3epwostl</div>
<svg class="a" style="left:1062.95px;top:1135.40px" width="28" height="28" viewBox="-14 -14 28 28" fill="none" stroke="#3a3a3a" stroke-width="1.35"><circle r="10.4"/><path d="M-3.9 -3.9 L3.9 3.9 M3.9 -3.9 L-3.9 3.9"/></svg>
<div class="t" style="left:1098.8px;top:1139.86px;font-size:19.3px;color:#3a3a3a;font-weight:400;letter-spacing:-0.6px;">No</div>
<svg class="a" style="left:1335px;top:1135.40px" width="28" height="28" viewBox="-14 -14 28 28"><circle r="10.9" fill="#0b7d6f"/><path d="M-5 0.8 L-1.7 4 L4.8 -3.3" fill="none" stroke="#fff" stroke-width="1.8"/></svg>
<div class="t" style="left:1370.8px;top:1140.46px;font-size:18.6px;color:#0d6b61;font-weight:400;letter-spacing:-1.3px;">Yes</div>
<div class="a" style="left:1449px;top:11px;width:1045px;height:1418px;border-radius:11px;background:#fff;box-shadow:0 0 2px rgba(0,0,0,0.10),0 4px 10px rgba(30,20,10,0.14),0 4px 28px rgba(30,20,10,0.12)"></div>
<div class="a" style="left:2505px;top:0;width:53px;height:1438px;background:#f4f4f4"></div>
<div class="t" style="left:1482.6px;top:50.18px;font-size:22px;color:#111;font-weight:700;letter-spacing:0px;">Filter by:</div>
<svg class="a" style="left:2430px;top:46px" width="30" height="30" viewBox="2430 46 30 30" fill="none" stroke="#1a1a1a" stroke-width="1.6"><path d="M2435.8 51.2 L2454.4 70.8 M2454.4 51.2 L2435.8 70.8"/></svg>
<div class="t" style="left:1482px;top:111.86px;font-size:19.3px;color:#555;font-weight:400;letter-spacing:0.11px;">Registration status</div>
<svg class="a" style="left:1484.8px;top:151.8px" width="24" height="24" viewBox="-12 -12 24 24"><circle r="9.3" fill="none" stroke="#8a8a8a" stroke-width="1.4"/></svg>
<div class="t" style="left:1514.6px;top:155.47px;font-size:16.1px;color:#161616;font-weight:400;letter-spacing:0px;">Any</div>
<svg class="a" style="left:1566.9px;top:151.8px" width="24" height="24" viewBox="-12 -12 24 24"><circle r="9.3" fill="none" stroke="#7a1cc6" stroke-width="1.5"/><circle r="5.6" fill="#7a1cc6"/></svg>
<div class="t" style="left:1596.3px;top:155.39px;font-size:16.2px;color:#161616;font-weight:400;letter-spacing:0px;">Member</div>
<svg class="a" style="left:1680.9px;top:151.8px" width="24" height="24" viewBox="-12 -12 24 24"><circle r="9.3" fill="none" stroke="#8a8a8a" stroke-width="1.4"/></svg>
<div class="t" style="left:1710px;top:155.34px;font-size:16.25px;color:#161616;font-weight:400;letter-spacing:0px;">Not a member</div>
<div class="t" style="left:1482.6px;top:213.46px;font-size:19.3px;color:#555;font-weight:400;letter-spacing:0px;">Customer status</div>
<svg class="a" style="left:1484.8px;top:252.89999999999998px" width="24" height="24" viewBox="-12 -12 24 24"><circle r="9.3" fill="none" stroke="#7a1cc6" stroke-width="1.5"/><circle r="5.6" fill="#7a1cc6"/></svg>
<div class="t" style="left:1514.6px;top:256.57px;font-size:16.1px;color:#161616;font-weight:400;letter-spacing:0px;">Any</div>
<svg class="a" style="left:1566.9px;top:252.89999999999998px" width="24" height="24" viewBox="-12 -12 24 24"><circle r="9.3" fill="none" stroke="#8a8a8a" stroke-width="1.4"/></svg>
<div class="t" style="left:1596.3px;top:256.32px;font-size:16.4px;color:#161616;font-weight:400;letter-spacing:0px;">Customer</div>
<svg class="a" style="left:1693px;top:252.89999999999998px" width="24" height="24" viewBox="-12 -12 24 24"><circle r="9.3" fill="none" stroke="#8a8a8a" stroke-width="1.4"/></svg>
<div class="t" style="left:1722.5px;top:256.40px;font-size:16.3px;color:#161616;font-weight:400;letter-spacing:0px;">Not a customer</div>
<div class="t" style="left:1482.4px;top:315.83px;font-size:19.1px;color:#555;font-weight:400;letter-spacing:0.3px;">Last activity</div>
<div class="a" style="left:1482px;top:351.2px;width:979px;height:54.3px;box-sizing:border-box;border:1.3px solid #7d7d7d;border-radius:27px"></div>
<div class="t" style="left:1505.7px;top:368.12px;font-size:19px;color:#1a1a1a;font-weight:400;letter-spacing:0.8px;">mm/dd/yyyy, ––:–– AM</div>
<div class="t" style="left:1723.5px;top:368.12px;font-size:19px;color:#1a1a1a;font-weight:400;letter-spacing:0px;">–</div>
<div class="t" style="left:1748px;top:368.12px;font-size:19px;color:#1a1a1a;font-weight:400;letter-spacing:0.8px;">mm/dd/yyyy, ––:–– AM</div>
<svg class="a" style="left:2368px;top:363px" width="30" height="30" viewBox="2368 363 30 30" fill="none" stroke="#222" stroke-width="1.5">
<circle cx="2382.9" cy="377.8" r="10.4"/><path d="M2379 373.9 L2386.8 381.7 M2386.8 373.9 L2379 381.7"/></svg>
<svg class="a" style="left:2408px;top:362px" width="28" height="30" viewBox="2408 362 28 30" fill="none" stroke="#222" stroke-width="1.6" stroke-linejoin="round">
<rect x="2413.2" y="368.6" width="17.8" height="18.6" rx="2"/><line x1="2413.2" y1="374.5" x2="2431" y2="374.5"/><line x1="2417.2" y1="367" x2="2417.2" y2="369.4"/><line x1="2427" y1="367" x2="2427" y2="369.4"/></svg>
<div class="a" style="left:1488.2px;top:444.3px;width:21.4px;height:21.5px;border-radius:4px;background:#7a1cc6"></div>
<svg class="a" style="left:1488px;top:444px" width="22" height="22" viewBox="1488 444 22 22" fill="none" stroke="#fff" stroke-width="2.4" stroke-linecap="round" stroke-linejoin="round"><path d="M1493.4 455 L1497.4 459 L1504.6 450.8"/></svg>
<div class="t" style="left:1515.5px;top:445.88px;font-size:16.45px;color:#161616;font-weight:400;letter-spacing:0px;">Hide anonymous profiles</div>
<svg class="a" style="left:1711px;top:441px" width="28" height="28" viewBox="1711 441 28 28" fill="none" stroke="#222" stroke-width="1.5">
<circle cx="1724.6" cy="454.6" r="10.2"/><line x1="1724.6" y1="452.6" x2="1724.6" y2="459.6" stroke-width="2.2"/><circle cx="1724.6" cy="449.4" r="1.15" fill="#222" stroke="none"/></svg>
<div class="a" style="left:1449px;top:1306.8px;width:1045px;height:1px;background:#e2e2e2"></div>
<div class="a" style="left:1482px;top:1341.2px;width:190px;height:54.5px;box-sizing:border-box;border:1.2px solid #b01a22;border-radius:28px"></div>
<svg class="a" style="left:1514px;top:1358px" width="22" height="22" viewBox="1514 1358 22 22" fill="none" stroke="#b01a22" stroke-width="1.3">
<circle cx="1524.2" cy="1368" r="7.7"/><path d="M1521.4 1365.2 L1527 1370.8 M1527 1365.2 L1521.4 1370.8"/></svg>
<div class="t" style="left:1543.8px;top:1361.26px;font-size:16px;color:#b01a22;font-weight:700;letter-spacing:0.25px;">CLEAR ALL</div>
<div class="a" style="left:2184px;top:1341.2px;width:140px;height:54.5px;box-sizing:border-box;border:1.2px solid #5e1a8c;border-radius:28px"></div>
<div class="t" style="left:2218.4px;top:1361.26px;font-size:16px;color:#5e1a8c;font-weight:700;letter-spacing:0.8px;">CANCEL</div>
<div class="a" style="left:2341px;top:1341.2px;width:120px;height:54.5px;border-radius:28px;background:linear-gradient(90deg,#7c12b6 0%,#9a1f8e 60%,#a2226e 100%);box-shadow:0 2px 8px rgba(150,60,255,0.25)"></div>
<div class="t" style="left:2374px;top:1361.26px;font-size:16px;color:#fff;font-weight:700;letter-spacing:0.4px;">APPLY</div>
<svg class="a" style="left:2512px;top:38px" width="40" height="40" viewBox="2512 38 40 40" fill="none" stroke="#5e1591" stroke-width="1.45" stroke-linejoin="round">
<path d="M2527 50.2 Q2528.332 56.268 2534.4 57.6 Q2528.332 58.932 2527 65.0 Q2525.668 58.932 2519.6 57.6 Q2525.668 56.268 2527 50.2 Z"/>
<path d="M2540.1 44.5 Q2541.1079999999997 49.092 2545.7 50.1 Q2541.1079999999997 51.108000000000004 2540.1 55.7 Q2539.092 51.108000000000004 2534.5 50.1 Q2539.092 49.092 2540.1 44.5 Z"/>
<path d="M2536.5 63.00000000000001 Q2537.358 66.042 2540.4 66.9 Q2537.358 67.75800000000001 2536.5 70.80000000000001 Q2535.642 67.75800000000001 2532.6 66.9 Q2535.642 66.042 2536.5 63.00000000000001 Z" fill="#6a12a6" stroke-width="0.8"/></svg>
<div class="t" style="left:2512.8px;width:40px;text-align:center;top:98.18px;font-size:22px;color:#65169a;-webkit-text-stroke:0.45px #65169a">A</div>
<div class="t" style="left:2512.8px;width:40px;text-align:center;top:136.78px;font-size:22px;color:#65169a;-webkit-text-stroke:0.45px #65169a">I</div>
<div class="t" style="left:2512.8px;width:40px;text-align:center;top:174.38px;font-size:22px;color:#65169a;-webkit-text-stroke:0.45px #65169a">R</div>
<div class="t" style="left:2512.8px;width:40px;text-align:center;top:212.98px;font-size:22px;color:#65169a;-webkit-text-stroke:0.45px #65169a">A</div>
</body></html>
